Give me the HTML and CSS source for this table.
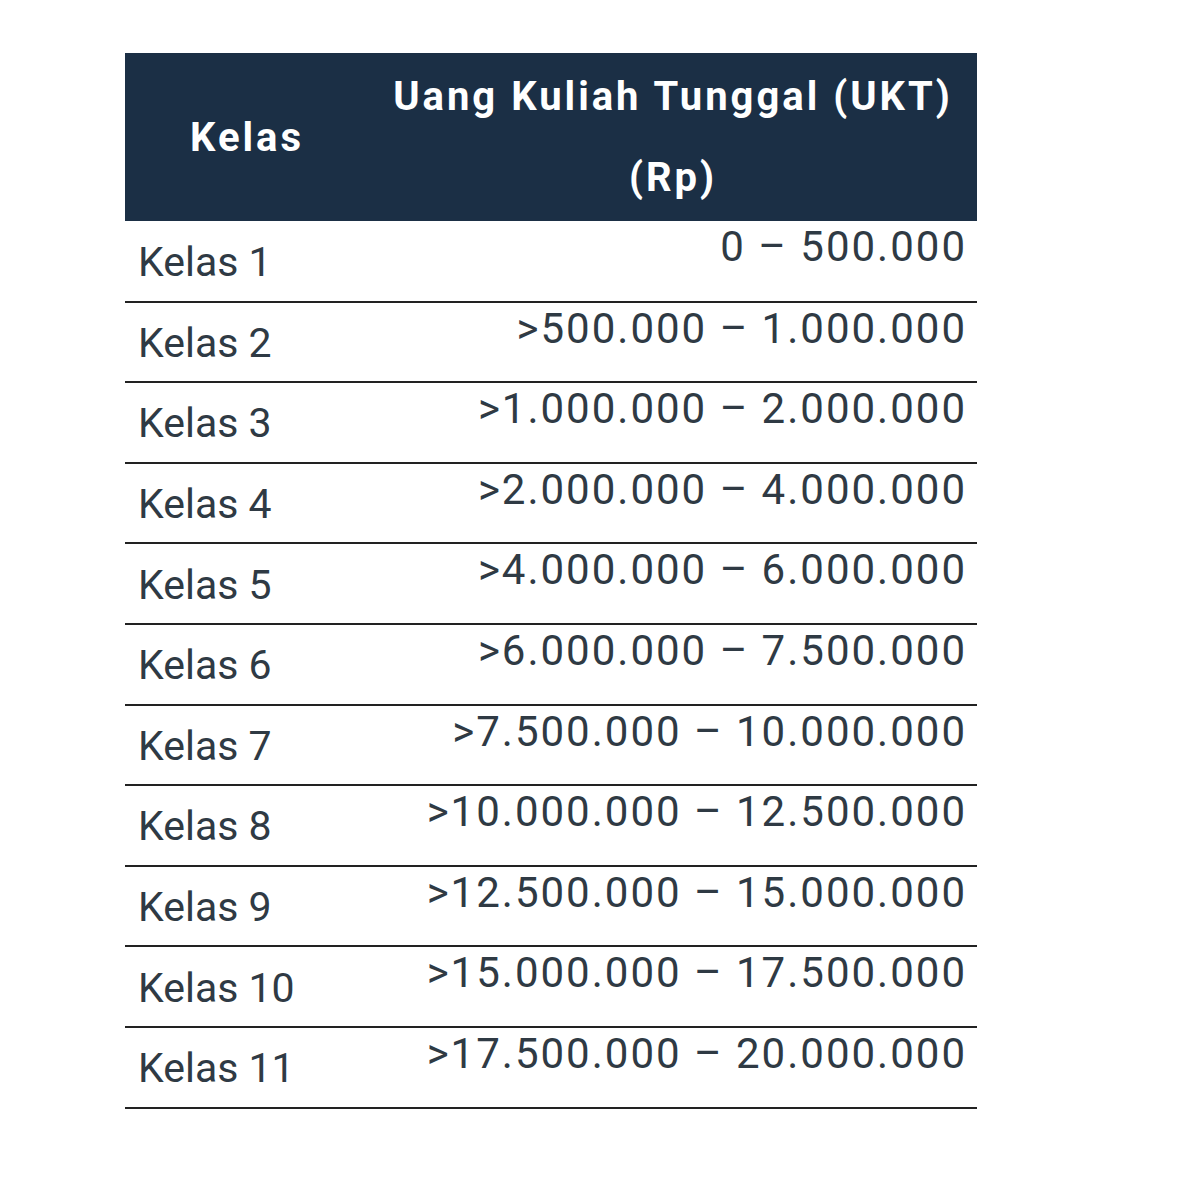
FILE: index.html
```html
<!DOCTYPE html>
<html>
<head>
<meta charset="utf-8">
<link rel="stylesheet" href="styles.css">
</head>
<body>
<div class="wrap">
<table class="ukt">
  <thead>
    <tr>
      <th class="c1">Kelas</th>
      <th class="c2">Uang Kuliah Tunggal (UKT)<br>(Rp)</th>
    </tr>
  </thead>
  <tbody>
    <tr><td class="c1">Kelas 1</td><td class="c2">0 – 500.000</td></tr>
    <tr><td class="c1">Kelas 2</td><td class="c2">&gt;500.000 – 1.000.000</td></tr>
    <tr><td class="c1">Kelas 3</td><td class="c2">&gt;1.000.000 – 2.000.000</td></tr>
    <tr><td class="c1">Kelas 4</td><td class="c2">&gt;2.000.000 – 4.000.000</td></tr>
    <tr><td class="c1">Kelas 5</td><td class="c2">&gt;4.000.000 – 6.000.000</td></tr>
    <tr><td class="c1">Kelas 6</td><td class="c2">&gt;6.000.000 – 7.500.000</td></tr>
    <tr><td class="c1">Kelas 7</td><td class="c2">&gt;7.500.000 – 10.000.000</td></tr>
    <tr><td class="c1">Kelas 8</td><td class="c2">&gt;10.000.000 – 12.500.000</td></tr>
    <tr><td class="c1">Kelas 9</td><td class="c2">&gt;12.500.000 – 15.000.000</td></tr>
    <tr><td class="c1">Kelas 10</td><td class="c2">&gt;15.000.000 – 17.500.000</td></tr>
    <tr><td class="c1">Kelas 11</td><td class="c2">&gt;17.500.000 – 20.000.000</td></tr>
  </tbody>
</table>
</div>
</body>
</html>
```
FILE: styles.css
```css
html, body {
  margin: 0;
  padding: 0;
  background: #ffffff;
}
.wrap {
  padding: 53px 0 0 125px;
}
.ukt {
  border-collapse: collapse;
  width: 852px;
  font-family: Roboto, "Liberation Sans", sans-serif;
  color: #2f3a44;
  table-layout: fixed;
}
.ukt th {
  background: #1b2f45;
  color: #ffffff;
  font-weight: 700;
  font-size: 40px;
  letter-spacing: 3px;
  text-align: center;
  line-height: 81px;
  padding: 3px 0;
  height: 162px;
}
.ukt th.c1 { width: 244px; box-sizing: border-box; }
.ukt td {
  border-bottom: 2px solid #222;
  height: 80.6px;
  padding: 0;
  box-sizing: border-box;
}
.ukt td.c1 {
  font-size: 41px;
  padding-left: 13px;
  vertical-align: middle;
  padding-top: 2px;
}
.ukt td.c2 {
  font-size: 42px;
  letter-spacing: 2px;
  text-align: right;
  padding-right: 10px;
  vertical-align: top;
  padding-top: 3px;
  line-height: 46px;
}
```
